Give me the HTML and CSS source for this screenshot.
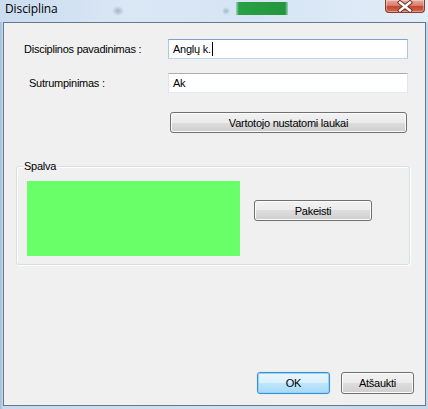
FILE: index.html
```html
<!DOCTYPE html>
<html lang="lt">
<head>
<meta charset="utf-8">
<title>Disciplina</title>
<link rel="stylesheet" href="styles.css">
</head>
<body>
<div class="window">
  <div class="titlebar">
    <span class="title">Disciplina</span>
    <div class="close">
      <svg width="40" height="13" viewBox="0 0 40 13">
        <path d="M15 2.5 L25 10.5 M25 2.5 L15 10.5" stroke="#6b2a1e" stroke-width="4.2" stroke-linecap="square" fill="none"/>
        <path d="M15 2.5 L25 10.5 M25 2.5 L15 10.5" stroke="#ffffff" stroke-width="2.4" stroke-linecap="square" fill="none"/>
      </svg>
    </div>
  </div>
  <div class="frame">
    <div class="client">
      <div class="row row-name">
        <span class="label">Disciplinos pavadinimas :</span>
        <div class="input input-focused"><span>Anglų k.</span><span class="caret"></span></div>
      </div>
      <div class="row row-abbr">
        <span class="label label-indent">Sutrumpinimas :</span>
        <div class="input"><span>Ak</span></div>
      </div>
      <div class="btn btn-custom">Vartotojo nustatomi laukai</div>
      <div class="group">
        <span class="legend">Spalva</span>
        <div class="group-body">
          <div class="swatch"></div>
          <div class="btn btn-change">Pakeisti</div>
        </div>
      </div>
      <div class="actions">
        <div class="btn btn-default">OK</div>
        <div class="btn btn-cancel">Atšaukti</div>
      </div>
    </div>
  </div>
</div>
</body>
</html>
```

FILE: styles.css
```css
html, body {
  margin: 0;
  padding: 0;
}
body {
  width: 428px;
  height: 409px;
  overflow: hidden;
  font-family: "Liberation Sans", Arial, sans-serif;
  font-size: 11px;
  color: #000;
  background: #c4d7eb;
}
.window {
  width: 428px;
  height: 409px;
  display: flex;
  flex-direction: column;
  background: linear-gradient(to right, #9fbbd9 0, #c6d9ed 3px, #d0e0f1 50%, #c3d6ea 100%);
}
.titlebar {
  height: 22px;
  flex: none;
  display: flex;
  align-items: flex-start;
  padding-left: 5px;
  padding-right: 3px;
  background:
    radial-gradient(ellipse 6px 5px at 118px 11px, rgba(120,135,150,0.55), rgba(120,135,150,0) 100%),
    radial-gradient(ellipse 4px 4px at 226px 11px, rgba(120,135,150,0.5), rgba(120,135,150,0) 100%),
    linear-gradient(to right, rgba(42,164,70,0.3), #28a043 3px, #23963c 49px, rgba(35,150,60,0.3)) 236px 2px / 52px 13px no-repeat,
    linear-gradient(to right, #cadcef 0%, #dae7f5 30%, #d5e4f4 60%, #e3edf8 100%);
}
.title {
  font-family: "Open Sans", "Noto Sans", sans-serif;
  font-size: 12px;
  line-height: 16px;
  margin-top: 1px;
  letter-spacing: -0.1px;
  color: #000;
}
.close {
  margin-left: auto;
  width: 40px;
  height: 13px;
  box-sizing: border-box;
  border: 1px solid #8a3b2c;
  border-top: none;
  border-radius: 0 0 4px 4px;
  background: linear-gradient(#e9a99b 0%, #d8806c 45%, #c4462e 55%, #d36a4e 100%);
  box-shadow: inset 0 0 0 1px rgba(255,255,255,0.35);
  overflow: hidden;
}
.close svg {
  display: block;
  margin-left: -1px;
}
.frame {
  flex: 1;
  display: flex;
  padding: 0 2px 3px 3px;
}
.client {
  flex: 1;
  display: flex;
  flex-direction: column;
  background: #f0f0f0;
  border: 1px solid #65788c;
  letter-spacing: -0.25px;
}
.row {
  display: flex;
  align-items: flex-start;
  padding-left: 20px;
}
.row-name {
  margin-top: 16px;
}
.row-abbr {
  margin-top: 14px;
}
.label {
  width: 144px;
  box-sizing: border-box;
  line-height: 19px;
  padding-top: 1px;
  white-space: nowrap;
}
.label-indent {
  padding-left: 5px;
}
.input {
  width: 240px;
  height: 20px;
  box-sizing: border-box;
  background: #fff;
  border: 1px solid #e2e3ea;
  border-top-color: #abadb3;
  border-bottom-color: #e3e9ef;
  padding-left: 4px;
  line-height: 18px;
  display: flex;
  align-items: center;
}
.input-focused {
  border-color: #a4c9e3;
  border-top-color: #7da2ce;
  border-bottom-color: #b7d9ed;
}
.caret {
  width: 1px;
  height: 14px;
  background: #000;
  margin-left: 1px;
}
.btn {
  box-sizing: border-box;
  display: flex;
  align-items: center;
  justify-content: center;
  border: 1px solid #707070;
  border-radius: 3px;
  background: linear-gradient(#f2f2f2 0%, #ebebeb 50%, #dddddd 50%, #cfcfcf 100%);
  box-shadow: inset 0 0 0 1px #fbfbfb;
  white-space: nowrap;
}
.btn-custom {
  margin-top: 19px;
  margin-left: 166px;
  width: 237px;
  height: 21px;
}
.group {
  margin-top: 33px;
  margin-left: 12px;
  width: 394px;
  height: 99px;
  box-sizing: border-box;
  border: 1px solid #d5dfe5;
  border-radius: 3px;
  box-shadow: inset 1px 1px 0 #fff, 1px 1px 0 #fff;
  display: flex;
  flex-direction: column;
}
.legend {
  align-self: flex-start;
  margin: -8px 0 -6px 6px;
  padding: 0 1px;
  line-height: 14px;
  background: #f0f0f0;
}
.group-body {
  display: flex;
  align-items: flex-start;
  padding-top: 14px;
  padding-left: 10px;
}
.swatch {
  width: 213px;
  height: 75px;
  background: #69ff69;
}
.btn-change {
  margin-left: 14px;
  margin-top: 19px;
  width: 118px;
  height: 21px;
}
.actions {
  margin-top: auto;
  display: flex;
  justify-content: flex-end;
  gap: 11px;
  padding: 0 11px 11px 0;
}
.actions .btn {
  width: 73px;
  height: 22px;
}
.btn-default {
  border-color: #3c8fcf;
  background: linear-gradient(#eaf6fd 0%, #d9f0fc 50%, #bee6fd 50%, #a7d9f5 100%);
  box-shadow: inset 0 0 0 1px #8fd6fa, 0 0 1px #7ecbf5;
}
```
